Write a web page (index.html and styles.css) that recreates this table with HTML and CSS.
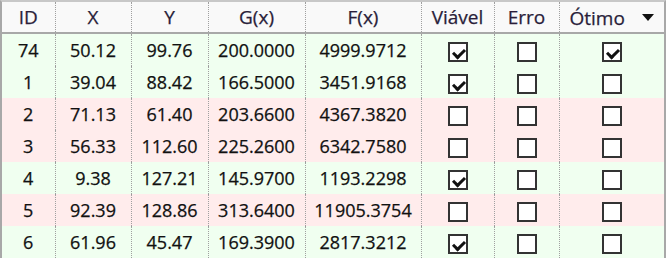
FILE: index.html
```html
<!DOCTYPE html>
<html>
<head>
<meta charset="utf-8">
<link rel="stylesheet" href="styles.css">
</head>
<body>
<div class="grid">
<table>
<colgroup>
<col class="c-id"><col class="c-x"><col class="c-y"><col class="c-g"><col class="c-f"><col class="c-v"><col class="c-e"><col class="c-o">
</colgroup>
<thead>
<tr><th>ID</th><th>X</th><th>Y</th><th>G(x)</th><th>F(x)</th><th>Viável</th><th>Erro</th><th class="sort"><span>Ótimo</span><span class="arrow"></span></th></tr>
</thead>
<tbody>
<tr class="ok"><td>74</td><td>50.12</td><td>99.76</td><td>200.0000</td><td>4999.9712</td><td><span class="cb on"></span></td><td><span class="cb"></span></td><td><span class="cb on"></span></td></tr>
<tr class="ok"><td>1</td><td>39.04</td><td>88.42</td><td>166.5000</td><td>3451.9168</td><td><span class="cb on"></span></td><td><span class="cb"></span></td><td><span class="cb"></span></td></tr>
<tr class="bad"><td>2</td><td>71.13</td><td>61.40</td><td>203.6600</td><td>4367.3820</td><td><span class="cb"></span></td><td><span class="cb"></span></td><td><span class="cb"></span></td></tr>
<tr class="bad"><td>3</td><td>56.33</td><td>112.60</td><td>225.2600</td><td>6342.7580</td><td><span class="cb"></span></td><td><span class="cb"></span></td><td><span class="cb"></span></td></tr>
<tr class="ok"><td>4</td><td>9.38</td><td>127.21</td><td>145.9700</td><td>1193.2298</td><td><span class="cb on"></span></td><td><span class="cb"></span></td><td><span class="cb"></span></td></tr>
<tr class="bad"><td>5</td><td>92.39</td><td>128.86</td><td>313.6400</td><td>11905.3754</td><td><span class="cb"></span></td><td><span class="cb"></span></td><td><span class="cb"></span></td></tr>
<tr class="ok"><td>6</td><td>61.96</td><td>45.47</td><td>169.3900</td><td>2817.3212</td><td><span class="cb on"></span></td><td><span class="cb"></span></td><td><span class="cb"></span></td></tr>
</tbody>
</table>
</div>
</body>
</html>
```
FILE: styles.css
```css
html, body { margin: 0; padding: 0; background: #ffffff; }
body { width: 669px; height: 258px; overflow: hidden; }
.grid {
  width: 666px;
  border-top: 2px solid #c8c8c8;
  border-left: 2px solid #a8a8a8;
  border-right: 2px solid #a8a8a8;
  box-sizing: border-box;
}
table {
  border-collapse: collapse;
  table-layout: fixed;
  width: 662px;
  font-family: "Open Sans", "Noto Sans", sans-serif;
  font-size: 18px;
  color: #111;
  -webkit-text-stroke: 0.25px #111;
}
.c-id { width: 53px; }
.c-x { width: 76px; }
.c-y { width: 77px; }
.c-g { width: 97px; }
.c-f { width: 116px; }
.c-v { width: 73px; }
.c-e { width: 65px; }
.c-o { width: 105px; }
th, td {
  padding: 0;
  text-align: center;
  white-space: nowrap;
  border-left: 1px dotted #a0a0a0;
}
th:first-child, td:first-child { border-left: none; }
th {
  height: 30px;
  font-weight: normal;
  font-size: 19px;
  background: #f9f9f9;
  border-bottom: 2px solid #a8a8a8;
  color: #2a1e3a;
  -webkit-text-stroke: 0.25px #2a1e3a;
}
td { height: 32px; }
tr.ok td { background: #f0fff0; }
tr.bad td { background: #ffecec; }
th.sort { text-align: left; padding-left: 10px; }
th.sort span { vertical-align: middle; }
.arrow {
  display: inline-block;
  margin-left: 17px;
  width: 0; height: 0;
  border-left: 6px solid transparent;
  border-right: 6px solid transparent;
  border-top: 7px solid #111;
}
.cb {
  display: inline-block;
  width: 20px; height: 20px;
  box-sizing: border-box;
  border: 2px solid #333;
  background: #fff;
  vertical-align: middle;
  position: relative;
  -webkit-text-stroke: 0;
}
.cb.on::after {
  content: "";
  position: absolute;
  left: 3px; top: 3px;
  width: 9px; height: 5px;
  border-left: 3px solid #111;
  border-bottom: 3px solid #111;
  transform: rotate(-45deg) translate(-1px, 1px);
}
```
